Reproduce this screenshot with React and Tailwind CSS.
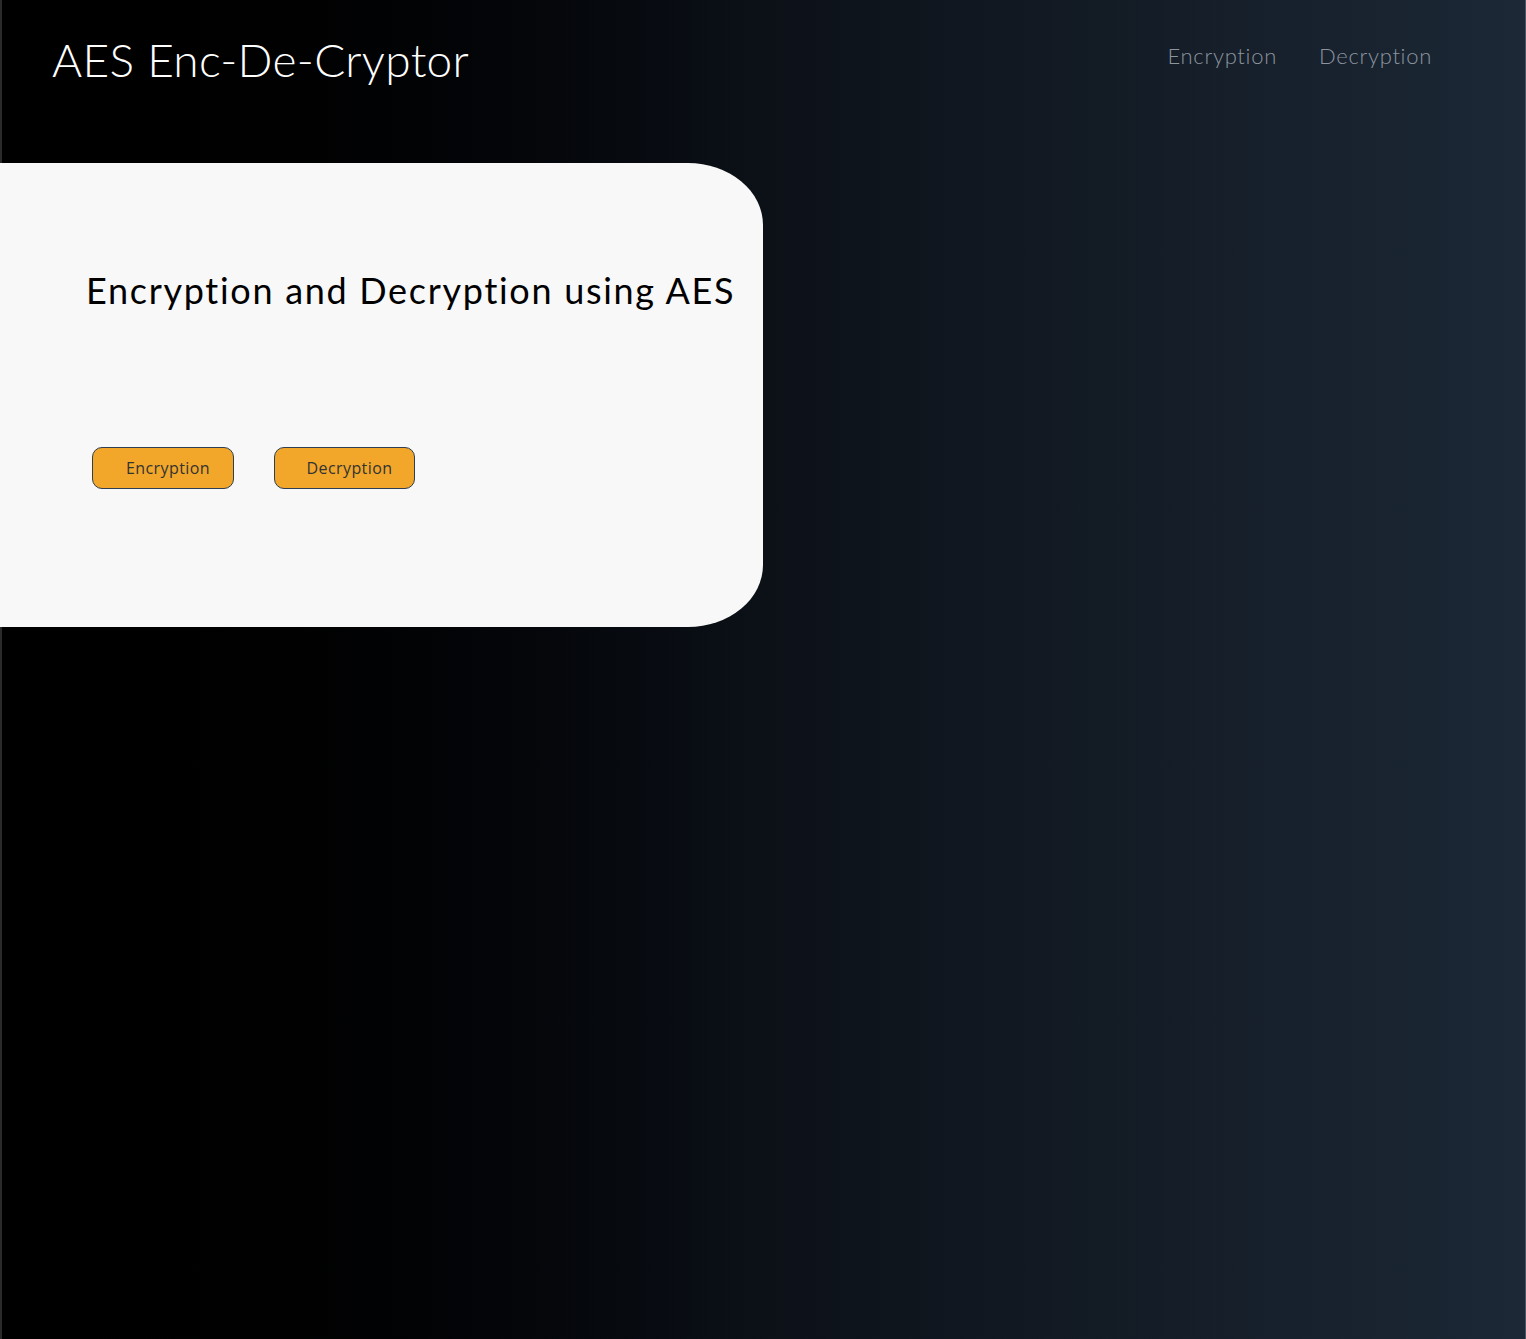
export default function App() {
  return (
    <div
      className="min-h-[1339px] w-full bg-gradient-to-r from-[#000000] via-[#0c1118] to-[#1c2836] border-l-2 border-[#2a2a2a] border-r border-r-[#4a5563] text-white"
      style={{ fontFamily: 'Lato, "Noto Sans", sans-serif' }}
    >
      {/* Header */}
      <header className="flex items-start justify-between pl-[50px] pr-[93px] pt-[30px]">
        <h1 className="text-[46px] font-light leading-[60px] tracking-[0.3px]">AES Enc-De-Cryptor</h1>
        <nav className="flex gap-[42px] pt-[9px]">
          <a className="text-[22px] font-light tracking-[0.7px] text-[#8c949e]">Encryption</a>
          <a className="text-[22px] font-light tracking-[0.7px] text-[#8c949e]">Decryption</a>
        </nav>
      </header>

      {/* Card */}
      <section className="-ml-[2px] mt-[73px] h-[464px] w-[763px] bg-[#f8f8f8] rounded-tr-[75px_62px] rounded-br-[75px_62px] pl-[86px] pt-[104px]">
        <h2 className="text-[36px] text-black leading-[46px] tracking-[1.7px]">
          Encryption and Decryption using AES
        </h2>
        <div className="mt-[134px] ml-[6px] flex gap-[40px]">
          <button
            className="h-[42px] w-[142px] rounded-[10px] border border-[#2e3f52] bg-[#f2a72b] pl-[10px] text-[16px] tracking-[0.4px] text-[#333333]"
            style={{ fontFamily: '"Open Sans", sans-serif' }}
          >
            Encryption
          </button>
          <button
            className="h-[42px] w-[141px] rounded-[10px] border border-[#2e3f52] bg-[#f2a72b] pl-[10px] text-[16px] tracking-[0.4px] text-[#333333]"
            style={{ fontFamily: '"Open Sans", sans-serif' }}
          >
            Decryption
          </button>
        </div>
      </section>
    </div>
  );
}
